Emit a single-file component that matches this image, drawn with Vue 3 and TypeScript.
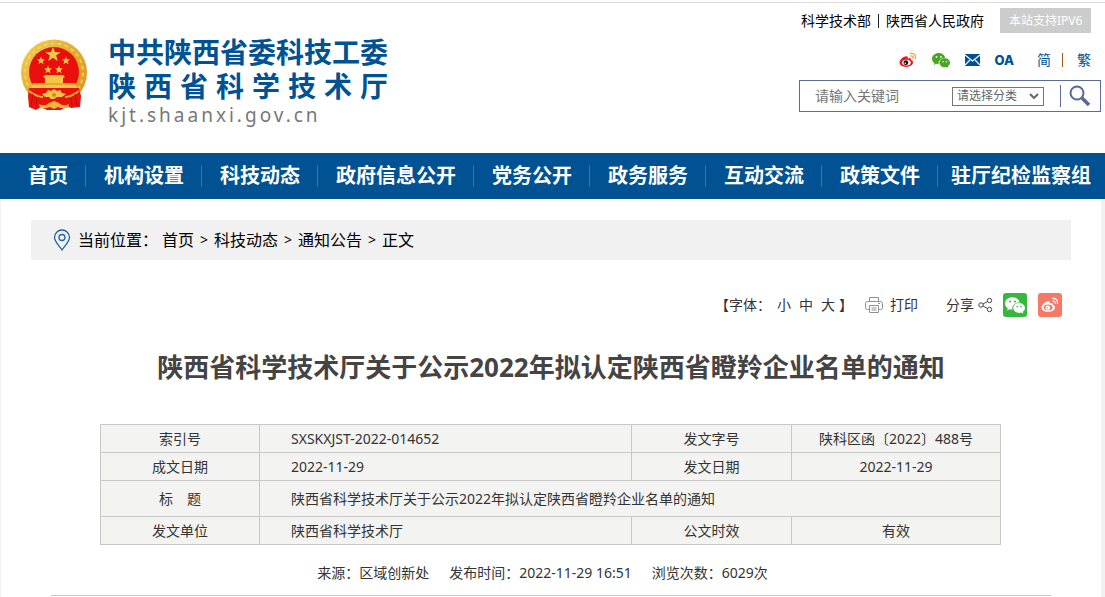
<script setup lang="ts">
import { ref } from 'vue'

interface Row {
  label: string
  value: string
  label2: string
  value2: string
}

const navItems: string[] = [
  '首页', '机构设置', '科技动态', '政府信息公开', '党务公开',
  '政务服务', '互动交流', '政策文件', '驻厅纪检监察组',
]
const crumbs: string[] = ['首页', '科技动态', '通知公告', '正文']
const title = '陕西省科学技术厅关于公示2022年拟认定陕西省瞪羚企业名单的通知'
const topRows: Row[] = [
  { label: '索引号', value: 'SXSKXJST-2022-014652', label2: '发文字号', value2: '陕科区函〔2022〕488号' },
  { label: '成文日期', value: '2022-11-29', label2: '发文日期', value2: '2022-11-29' },
]
const keyword = ref('')
const category = ref('')
</script>

<template>
  <div class="page">
    <svg class="defs" aria-hidden="true">
      <defs>
        <symbol id="wechat" viewBox="0 0 24 20">
          <path d="M9 0C4 0 0 3.300 0 7.500c0 2.400 1.300 4.400 3.300 5.800L2.500 16l3-1.600c1.100.3 2.200.5 3.400.5C8 10.300 12 6.200 17.700 6.200 16.800 2.600 13.200 0 9 0z" fill="currentColor" />
          <path d="M24 12.900c0-3.300-3.200-5.900-7-5.900s-7 2.600-7 5.900 3.100 6 7 6c.9 0 1.700-.1 2.500-.4l2.400 1.300-.7-2.200c1.700-1.100 2.800-2.800 2.800-4.700z" fill="currentColor" />
          <g class="eyes">
            <circle cx="6" cy="5.200" r="1.200" /><circle cx="12" cy="5.200" r="1.200" />
            <circle cx="14.700" cy="11.500" r="1" /><circle cx="19.300" cy="11.500" r="1" />
          </g>
        </symbol>
        <linearGradient id="gold" x1="0" y1="0" x2="1" y2="1">
          <stop offset="0" stop-color="#f3cf5c" /><stop offset=".5" stop-color="#e3ab2c" /><stop offset="1" stop-color="#d9951c" />
        </linearGradient>
      </defs>
    </svg>

    <header class="header">
      <a class="logo" href="#">
        <svg class="emblem" viewBox="0 0 68 74" aria-hidden="true">
          <circle cx="34" cy="34.500" r="33" fill="url(#gold)" />
          <circle cx="34" cy="34.500" r="29" fill="none" stroke="#f5d872" stroke-width="2" stroke-dasharray="4 3" opacity=".7" />
          <circle cx="34" cy="34" r="25" fill="#e90f0c" />
          <path d="M9 50h50l2 8-1 11-9 1-4-2-6 4H27l-6-3-5 3-7-3-1-11z" fill="#e8120e" />
          <g fill="#f2c748">
            <path d="M33 9l2 5 5.500.2-4.300 3.400 1.500 5.300L33 19.800l-4.700 3.100 1.500-5.300-4.300-3.400 5.500-.2z" />
            <path id="star" d="M21 18.500l1.100 2.700 2.900.2-2.200 1.900.7 2.900-2.500-1.600-2.500 1.600.7-2.900-2.200-1.900 2.900-.2z" />
            <use href="#star" x="25" /><use href="#star" x="7" y="9" /><use href="#star" x="18" y="9" />
            <path d="M25 37h18l2 2-2 1v5h12l2 5H11l2-5h12v-5l-2-1z" />
            <path d="M22 56l4-1 2-3 3 1 3-2 3 2 3-1 2 3 4 1-4 3h-5l-3 2h-3l-2-2h-4z" />
          </g>
          <path d="M13 46h42" stroke="#d68b1c" stroke-width="1" />
          <path d="M9 53q8 6 14 6M59 53q-8 6-14 6" fill="none" stroke="#e9ad2f" stroke-width="2" />
          <path d="M19 66q6 3 10-1l5-2 5 2q4 4 10 1l-1 4q-6 1-10-1l-4 2-4-2q-5 2-10 1z" fill="#edb63a" />
          <path d="M13 56l-2 12M17 60l-1 8M51 60l1 8M55 56l2 12" stroke="#c20d09" stroke-width="1" />
          <circle cx="34" cy="57" r="2" fill="#d98c1c" />
        </svg>
        <span class="brand">
          <span class="brand-line">中共陕西省委科技工委</span>
          <span class="brand-line">陕西省科学技术厅</span>
          <span class="domain">kjt.shaanxi.gov.cn</span>
        </span>
      </a>

      <div class="tools">
        <div class="links">
          <a href="#">科学技术部</a><i class="bar"></i><a href="#">陕西省人民政府</a>
          <span class="ipv6">本站支持IPV6</span>
        </div>
        <div class="icons">
          <a href="#" aria-label="微博">
            <svg width="18" height="16" viewBox="0 0 18 16">
              <path d="M7.500 4.200C4.500 4.200.5 7.500.5 10.600c0 2.700 3 4.400 6.600 4.400 4.200 0 7-2.400 7-4.700 0-1.300-1-2.100-2.100-2.400.4-1.600-.8-2.200-3.200-1.200.4-1.600 0-2.500-1.300-2.500z" fill="#f01820" />
              <ellipse cx="7.400" cy="10.600" rx="4.300" ry="2.900" fill="#fff" />
              <circle cx="6.900" cy="10.700" r="2.400" fill="#111" /><circle cx="6.300" cy="11.200" r=".8" fill="#fff" />
              <path d="M11.500 1.500c3-.8 5.800 1.700 4.900 5M11.800 4c1.700-.3 2.800 1 2.300 2.300" fill="none" stroke="#f9a04a" stroke-width="1.300" stroke-linecap="round" />
            </svg>
          </a>
          <a href="#" aria-label="微信" class="wx"><svg width="18" height="15"><use href="#wechat" /></svg></a>
          <a href="#" aria-label="邮箱">
            <svg width="15" height="12" viewBox="0 0 15 12">
              <path d="M0 0h15v12H0z" fill="#005293" />
              <path d="M0 1l7.500 6L15 1M0 11l5-5M15 11l-5-5" fill="none" stroke="#fff" stroke-width="1.200" />
            </svg>
          </a>
          <a href="#" class="oa">OA</a>
          <span class="lang"><a href="#">简</a><i class="bar brown"></i><a href="#">繁</a></span>
        </div>
        <form class="search" @submit.prevent>
          <input v-model="keyword" type="text" placeholder="请输入关键词" aria-label="请输入关键词">
          <span class="select">
            <select v-model="category" aria-label="请选择分类"><option value="">请选择分类</option></select>
            <svg width="10" height="6" viewBox="0 0 10 6"><path d="M1 1l4 4 4-4" fill="none" stroke="#666" stroke-width="2" /></svg>
          </span>
          <button type="submit" aria-label="搜索">
            <svg width="22" height="22" viewBox="0 0 22 22">
              <circle cx="8" cy="8" r="6.500" fill="none" stroke="#56699a" stroke-width="2" />
              <path d="M13 13l7 7" stroke="#56699a" stroke-width="3.500" />
            </svg>
          </button>
        </form>
      </div>
    </header>

    <nav class="nav">
      <a v-for="item in navItems" :key="item" href="#">{{ item }}</a>
    </nav>

    <main class="main">
      <div class="crumbs">
        <svg width="18" height="22" viewBox="0 0 18 22" fill="none" stroke="#1d64a0" stroke-width="1.300">
          <path d="M9 21C6 16.500 1.500 12.500 1.500 8.500a7.500 7.500 0 0 1 15 0C16.500 12.500 12 16.500 9 21z" />
          <circle cx="9" cy="8.500" r="3" />
        </svg>
        <span class="where">当前位置：</span>
        <template v-for="(c, i) in crumbs" :key="c">
          <span v-if="i" class="gt">&gt;</span><a href="#">{{ c }}</a>
        </template>
      </div>

      <div class="actions">
        <span class="font-label">【字体：</span>
        <button type="button" class="size">小</button>
        <button type="button" class="size">中</button>
        <button type="button" class="size">大</button>
        <span>】</span>
        <button type="button" class="print">
          <svg width="18" height="16" viewBox="0 0 18 16" fill="none" stroke="#909090">
            <path d="M4.500 4.500v-4h9v4M4.500 12.500h-2a2 2 0 0 1-2-2v-4a2 2 0 0 1 2-2h13a2 2 0 0 1 2 2v4a2 2 0 0 1-2 2h-2M4.500 8.500h9v7h-9zM6.500 11h5M6.500 13h5M13 6.500h2" />
          </svg>打印
        </button>
        <span class="share">分享
          <svg width="15" height="16" viewBox="0 0 15 16" fill="none" stroke="#444">
            <circle cx="3" cy="8" r="2.200" /><circle cx="11.500" cy="3.500" r="2.200" /><circle cx="11.500" cy="12.500" r="2.200" />
            <path d="M5 7l4.500-2.500M5 9l4.500 2.500" />
          </svg>
        </span>
        <a href="#" class="tile green" aria-label="微信"><svg width="20" height="17"><use href="#wechat" /></svg></a>
        <a href="#" class="tile red" aria-label="微博">
          <svg width="18" height="16" viewBox="0 0 18 16">
            <path d="M7.500 4.200C4.500 4.200.5 7.500.5 10.600c0 2.700 3 4.400 6.600 4.400 4.200 0 7-2.400 7-4.700 0-1.300-1-2.100-2.100-2.400.4-1.600-.8-2.200-3.200-1.200.4-1.600 0-2.500-1.300-2.500z" fill="#fff" />
            <ellipse cx="7.200" cy="10.500" rx="4.400" ry="2.900" fill="#f87868" />
            <circle cx="6.800" cy="10.700" r="2.300" fill="#fff" /><circle cx="6.600" cy="10.900" r=".7" fill="#f87868" />
            <path d="M11.500 1.500c3-.8 5.800 1.700 4.900 5M11.800 4c1.700-.3 2.800 1 2.300 2.300" fill="none" stroke="#fff" stroke-width="1.200" stroke-linecap="round" />
          </svg>
        </a>
      </div>

      <h1>{{ title }}</h1>

      <table class="info">
        <colgroup><col class="c1"><col class="c2"><col class="c3"><col class="c4"></colgroup>
        <tbody>
          <tr v-for="r in topRows" :key="r.label">
            <th scope="row">{{ r.label }}</th><td class="left">{{ r.value }}</td>
            <th scope="row">{{ r.label2 }}</th><td>{{ r.value2 }}</td>
          </tr>
          <tr class="tall">
            <th scope="row">标&emsp;题</th><td class="left" colspan="3">{{ title }}</td>
          </tr>
          <tr>
            <th scope="row">发文单位</th><td class="left">陕西省科学技术厅</td>
            <th scope="row">公文时效</th><td>有效</td>
          </tr>
        </tbody>
      </table>

      <div class="meta">
        <span>来源：区域创新处</span><span>发布时间：2022-11-29 16:51</span><span>浏览次数：6029次</span>
      </div>
    </main>
  </div>
</template>

<style>
body {
  background: #f2f2f2;
}
</style>

<style scoped>
.page {
  padding-top: 2px;
  background: #fff;
  font-family: "Noto Sans", "Noto Sans CJK SC", sans-serif;
  font-size: 14px;
  line-height: 20px;
  color: #333;
}
.page * { box-sizing: border-box; }
a { color: inherit; text-decoration: none; }
button, input, select { font: inherit; color: inherit; border: 0; background: none; margin: 0; padding: 0; }
svg { display: block; flex: none; }
.defs { position: absolute; width: 0; height: 0; }
.eyes { fill: var(--eye, #fff); }

.header {
  display: flex;
  justify-content: space-between;
  align-items: flex-start;
  min-height: 151px;
  padding-left: 20px;
  border-top: 1px solid #ddd;
}
.logo { display: flex; gap: 20px; padding-top: 32px; }
.emblem { width: 68px; height: 74px; margin-top: 3px; }
.brand { display: flex; flex-direction: column; }
.brand-line {
  width: 280px;
  font-size: 28px;
  line-height: 34px;
  font-weight: 700;
  color: #005293;
  text-align-last: justify;
}
.domain { font-size: 19px; line-height: 24px; color: #777; letter-spacing: 3px; }

.tools { padding: 5px 4px 0 0; color: #000; }
.links { display: flex; align-items: center; height: 25px; margin-left: 2px; }
.bar { width: 1px; height: 14px; margin: 0 7px; background: #222; }
.ipv6 {
  margin-left: 16px;
  padding: 0 9px;
  font-size: 12px;
  line-height: 25px;
  color: #fff;
  background: #ccc;
}
.icons {
  display: flex;
  align-items: center;
  justify-content: flex-end;
  gap: 15px;
  height: 30px;
  margin-top: 12px;
  padding-right: 10px;
  color: #005293;
}
.wx { color: #4aa520; }
.oa { font: 800 13px/20px Inter, sans-serif; }
.lang { display: flex; align-items: center; margin-left: 8px; }
.brown { margin: 0 14px 0 11px; background: #a85a10; }
.search {
  display: flex;
  align-items: center;
  width: 302px;
  height: 32px;
  margin-top: 5px;
  border: 1px solid #5b6c9b;
}
.search input { flex: 1; min-width: 0; padding-left: 15px; outline: 0; }
.search input::placeholder { color: #757575; opacity: 1; }
.select { display: flex; align-items: center; width: 92px; height: 19px; border: 1px solid #767676; position: relative; }
.select select { width: 100%; padding-left: 4px; font-size: 12px; line-height: 16px; color: #666; appearance: none; }
.select svg { position: absolute; right: 4px; pointer-events: none; }
.search button { margin-left: 16px; padding: 0 9px 0 8px; border-left: 1px solid #5b6c9b; }

.nav {
  display: flex;
  align-items: center;
  height: 46px;
  padding-left: 10px;
  background: #005293;
  overflow: hidden;
}
.nav a {
  padding: 0 17px 0 18px;
  border-right: 1px solid #3a72ad;
  font-size: 20px;
  line-height: 22px;
  font-weight: 700;
  color: #fff;
  white-space: nowrap;
}
.nav a:last-child { padding: 0 0 0 13px; border: 0; }

.main {
  padding: 21px 30px 30px;
  margin-right: 4px;
  border-left: 1px solid #f2f2f2;
  background: #fff;
  box-shadow: 4px 0 #f2f2f2;
}
.crumbs {
  display: flex;
  align-items: center;
  height: 40px;
  padding-left: 22px;
  background: #f1f1f1;
  font-size: 16px;
  color: #000;
}
.where { margin: 0 4px 0 7px; }
.gt { margin: 0 6px; font-size: 14px; }

.actions {
  display: flex;
  align-items: center;
  justify-content: flex-end;
  height: 24px;
  margin-top: 33px;
  padding-right: 9px;
}
.font-label { margin-right: 2px; }
.size { margin: 0 4px; }
.print { display: flex; align-items: center; gap: 7px; margin-left: 12px; }
.share { display: flex; align-items: center; gap: 4px; margin-left: 28px; }
.tile { display: grid; place-items: center; width: 24px; height: 24px; margin-left: 10px; border-radius: 3px; color: #fff; }
.green { background: #35b83d; --eye: #35b83d; }
.red { margin-left: 11px; background: #f87868; }

h1 {
  margin: 30px 0 0;
  font-size: 26px;
  line-height: 40px;
  font-weight: 700;
  color: #444;
  text-align: center;
}
.info {
  width: calc(100% - 139px);
  margin: 37px 0 0 69px;
  border-collapse: collapse;
  table-layout: fixed;
  background: #f3f3f1;
}
.c1 { width: 159px; }
.c3 { width: 160px; }
.c4 { width: 209px; }
.info th, .info td { height: 28px; padding: 0; border: 1px solid #c8c8c8; font-weight: 400; text-align: center; }
.info .tall > * { height: 36px; }
.info .left { padding-left: 31px; text-align: left; }
.meta {
  display: flex;
  justify-content: center;
  gap: 20px;
  margin: 0 20px;
  padding: 18px 17px 12px 0;
  border-bottom: 1px solid #c8c8c8;
}
</style>
